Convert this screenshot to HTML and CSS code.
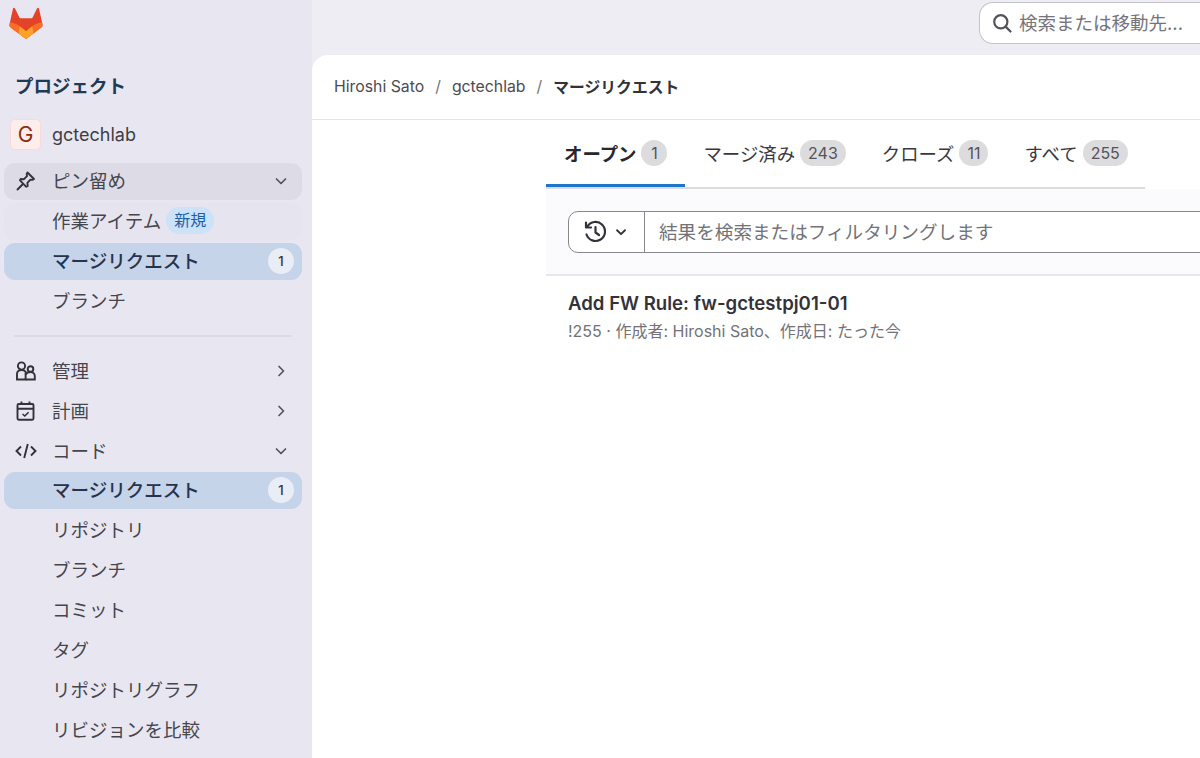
FILE: index.html
```html
<!DOCTYPE html>
<html lang="ja">
  <head>
    <meta charset="UTF-8" />
    <meta name="viewport" content="width=device-width, initial-scale=1.0" />
    <title>マージリクエスト</title>
    <link rel="stylesheet" href="styles.css">
  </head>
  <body>
    <aside class="sidebar">
      <div class="logo-row">
        <svg class="logo" width="34" height="33" viewBox="0 0 34 33">
          <path fill="#e24329" d="M17 32 L1.6 20.4 C0.5 19.5 0.2 18.2 0.6 16.9 L4 1.6 C4.2 0.4 5.6 0.4 6 1.5 L10.8 11.2 H23.2 L28 1.5 C28.4 0.4 29.8 0.4 30 1.6 L33.4 16.9 C33.8 18.2 33.5 19.5 32.4 20.4 Z"/>
          <path fill="#fc6d26" d="M17 32 L10.8 27.2 L1.6 20.4 C0.5 19.5 0.2 18.2 0.6 16.9 L0.9 15.4 C4.6 15.6 8 17 10.8 19.2 L17 24.2 L23.2 19.2 C26 17 29.4 15.6 33.1 15.4 L33.4 16.9 C33.8 18.2 33.5 19.5 32.4 20.4 L23.2 27.2 Z"/>
          <path fill="#fca326" d="M17 32 L9.6 26.4 L10.8 19.2 L17 24.2 L23.2 19.2 L24.4 26.4 Z"/>
        </svg>
      </div>

      <h2 class="sidebar-title">プロジェクト</h2>

      <div class="project-row">
        <span class="avatar">G</span>
        <span>gctechlab</span>
      </div>

      <!-- ピン留め -->
      <div class="nav-item nav-open">
        <svg class="nav-icon" width="22" height="20" viewBox="0 0 22 20" fill="none" stroke="#333238" stroke-width="1.9" stroke-linejoin="round" stroke-linecap="round">
          <path d="M12.5 1.5 L19 8 L17.4 8.9 L15.4 8.7 L12.4 11.8 L12.7 15 L11.3 15.8 L5 9.4 L5.7 8 L9 8.2 L12 5.2 L11.7 3.2 Z"/>
          <path d="M8 13 L2.5 18.5"/>
        </svg>
        <span class="nav-label">ピン留め</span>
        <svg class="chevron" width="16" height="16" viewBox="0 0 16 16"><path d="M3.5 6 L8 10.5 L12.5 6"/></svg>
      </div>
      <div class="nav-item nav-sub nav-hint">
        <span class="nav-label">作業アイテム</span>
        <span class="new-badge">新規</span>
      </div>
      <div class="nav-item nav-sub nav-active">
        <span class="nav-label">マージリクエスト</span>
        <span class="count">1</span>
      </div>
      <div class="nav-item nav-sub">
        <span class="nav-label">ブランチ</span>
      </div>

      <hr class="divider">

      <div class="nav-item">
        <svg class="nav-icon" width="22" height="20" viewBox="0 0 22 20" fill="none" stroke="#333238" stroke-width="1.9">
          <circle cx="6.5" cy="5" r="3.6"/>
          <path d="M2 18.5 V13 C2 10.5 4 9 6.5 9 C8 9 9.6 9.6 10.6 10.6 V18.5 Z"/>
          <circle cx="15.5" cy="8" r="2.8"/>
          <path d="M10.6 18.5 H19.8 V15 C19.8 12.8 18 11 15.5 11 C13.4 11 11.6 11.9 10.6 13.5"/>
        </svg>
        <span class="nav-label">管理</span>
        <svg class="chevron" width="16" height="16" viewBox="0 0 16 16"><path d="M6 3.5 L10.5 8 L6 12.5"/></svg>
      </div>
      <div class="nav-item">
        <svg class="nav-icon" width="22" height="20" viewBox="0 0 22 20" fill="none" stroke="#333238" stroke-width="1.9">
          <rect x="2.5" y="3" width="16" height="15.8" rx="1.2"/>
          <path d="M2.5 7.8 H18.5 M6.5 0.5 V3.5 M14.5 0.5 V3.5"/>
          <path d="M7.5 13 L9.8 15 L13.6 11.2" stroke-width="1.6"/>
        </svg>
        <span class="nav-label">計画</span>
        <svg class="chevron" width="16" height="16" viewBox="0 0 16 16"><path d="M6 3.5 L10.5 8 L6 12.5"/></svg>
      </div>
      <div class="nav-item">
        <svg class="nav-icon" width="22" height="18" viewBox="0 0 22 18" fill="none" stroke="#333238" stroke-width="1.9">
          <path d="M6 4.5 L1.5 9 L6 13.5 M16 4.5 L20.5 9 L16 13.5 M12.8 2 L9.2 16"/>
        </svg>
        <span class="nav-label">コード</span>
        <svg class="chevron" width="16" height="16" viewBox="0 0 16 16"><path d="M3.5 6 L8 10.5 L12.5 6"/></svg>
      </div>
      <div class="nav-item nav-sub nav-active">
        <span class="nav-label">マージリクエスト</span>
        <span class="count">1</span>
      </div>
      <div class="nav-item nav-sub"><span class="nav-label">リポジトリ</span></div>
      <div class="nav-item nav-sub"><span class="nav-label">ブランチ</span></div>
      <div class="nav-item nav-sub"><span class="nav-label">コミット</span></div>
      <div class="nav-item nav-sub"><span class="nav-label">タグ</span></div>
      <div class="nav-item nav-sub"><span class="nav-label">リポジトリグラフ</span></div>
      <div class="nav-item nav-sub"><span class="nav-label">リビジョンを比較</span></div>
    </aside>

    <div class="right-side">
      <header class="topbar">
        <div class="global-search">
          <svg width="20" height="20" viewBox="0 0 20 20" fill="none" stroke="#55535a" stroke-width="2.2">
            <circle cx="8.8" cy="8.8" r="6.6"/>
            <path d="M13.6 13.6 L18.5 18.5" stroke-linecap="round"/>
          </svg>
          <span>検索または移動先...</span>
        </div>
      </header>

      <main class="panel">
        <nav class="breadcrumb">
          <span>Hiroshi Sato</span>
          <span class="sep">/</span>
          <span>gctechlab</span>
          <span class="sep">/</span>
          <strong>マージリクエスト</strong>
        </nav>

        <section class="content">
          <div class="tabs">
            <div class="tab tab-active">オープン <span class="tab-count">1</span></div>
            <div class="tab">マージ済み <span class="tab-count">243</span></div>
            <div class="tab">クローズ <span class="tab-count">11</span></div>
            <div class="tab">すべて <span class="tab-count">255</span></div>
          </div>

          <div class="filter-band">
            <div class="filter-box">
              <div class="history-btn">
                <svg width="24" height="24" viewBox="0 0 24 24" fill="none" stroke="#333238" stroke-width="2.2" stroke-linecap="round" stroke-linejoin="round">
                  <path d="M3.5 14.5 A9.5 9.5 0 1 0 4.4 6.5"/>
                  <path d="M3 2.5 V7.5 H8"/>
                  <path d="M12.5 7 V12.5 L16 15"/>
                </svg>
                <svg width="14" height="14" viewBox="0 0 16 16" fill="none" stroke="#333238" stroke-width="2.2" stroke-linecap="round" stroke-linejoin="round"><path d="M3.5 6 L8 10.5 L12.5 6"/></svg>
              </div>
              <div class="filter-input">結果を検索またはフィルタリングします</div>
            </div>
          </div>

          <div class="mr-item">
            <div class="mr-title">Add FW Rule: fw-gctestpj01-01</div>
            <div class="mr-meta">!255 · 作成者: Hiroshi Sato、作成日: たった今</div>
          </div>
        </section>
      </main>
    </div>
  </body>
</html>
```

FILE: styles.css
```css
* {
  box-sizing: border-box;
}

html,
body {
  height: 100%;
}

body {
  margin: 0;
  display: flex;
  overflow: hidden;
  background-color: #eeedf4;
  color: #333238;
  font-family: Inter, "Noto Sans CJK JP", sans-serif;
  font-size: 18.5px;
}

/* Sidebar */
.sidebar {
  width: 312px;
  flex-shrink: 0;
  padding: 0 10px 0 4px;
  background-color: #e8e7f1;
}

.logo-row {
  height: 69px;
  padding: 7px 0 0 5px;
}

.logo {
  display: block;
}

.sidebar-title {
  margin: 0;
  padding-left: 11px;
  height: 34px;
  line-height: 34px;
  font-size: 18.5px;
  font-weight: 700;
  color: #1f3a55;
}

.project-row {
  display: flex;
  align-items: center;
  gap: 11px;
  height: 42px;
  margin-top: 10px;
  padding-left: 6px;
  font-size: 18px;
  color: #3f3e45;
}

.avatar {
  width: 31px;
  height: 31px;
  display: flex;
  align-items: center;
  justify-content: center;
  border: 1px solid #f5dcd8;
  border-radius: 5px;
  background-color: #fdeeeb;
  color: #8f2a14;
  font-size: 21px;
}

.nav-item {
  display: flex;
  align-items: center;
  height: 37px;
  margin-bottom: 3px;
  padding: 0 13px 0 11px;
  border-radius: 11px;
  color: #46454c;
  line-height: 34px;
}

.nav-open {
  margin-top: 8px;
  padding-bottom: 2px;
  background-color: #dddce6;
}

.nav-hint {
  background-color: #e6e5ef;
}

.nav-sub {
  padding-left: 48px;
  padding-bottom: 2px;
}

.nav-active {
  background-color: #c6d4e9;
  color: #27334d;
  font-weight: 500;
}

.nav-icon {
  flex-shrink: 0;
  margin-right: 15px;
}

.nav-label {
  white-space: nowrap;
}

.chevron {
  margin-left: auto;
  fill: none;
  stroke: #55535a;
  stroke-width: 1.7;
  stroke-linecap: round;
  stroke-linejoin: round;
}

.new-badge {
  margin-left: 5px;
  padding: 0 8px;
  height: 27px;
  line-height: 27px;
  border-radius: 14px;
  background-color: #cbe2f9;
  color: #1f5ea8;
  font-size: 16px;
}

.count {
  margin-left: auto;
  margin-right: -5px;
  width: 26px;
  height: 26px;
  line-height: 26px;
  text-align: center;
  border-radius: 50%;
  background-color: #e9edf6;
  color: #333238;
  font-size: 13px;
  font-weight: 500;
}

.divider {
  height: 2px;
  margin: 15px 10px 15px 10px;
  border: 0;
  background-color: #dddce6;
}

/* Right side */
.right-side {
  flex: 1;
  min-width: 0;
  display: flex;
  flex-direction: column;
}

.topbar {
  height: 55px;
  flex-shrink: 0;
  padding: 2px 0 0 667px;
}

.global-search {
  display: flex;
  align-items: center;
  gap: 7px;
  width: 221px;
  height: 42px;
  padding-left: 12px;
  border: 1px solid #c4c3c9;
  border-right: 0;
  border-radius: 14px 0 0 14px;
  background-color: #fff;
  color: #75747b;
  white-space: nowrap;
  line-height: 36px;
}

.panel {
  flex: 1;
  min-width: 0;
  overflow: hidden;
  background-color: #fff;
  border-top-left-radius: 16px;
}

.breadcrumb {
  display: flex;
  align-items: center;
  gap: 11px;
  height: 65px;
  padding: 0 0 2px 22px;
  border-bottom: 1px solid #e4e3ea;
  font-size: 15.8px;
  color: #4c4b52;
}

.breadcrumb strong {
  color: #333238;
  font-weight: 700;
}

.sep {
  color: #737278;
}

.content {
  margin-left: 234px;
}

.tabs {
  display: flex;
  width: 599px;
  height: 69px;
  border-bottom: 2px solid #dcdcde;
}

.tab {
  display: flex;
  align-items: center;
  gap: 5px;
  height: 67px;
  padding: 2px 18px 0 18px;
  white-space: nowrap;
  color: #3a383f;
  border-bottom: 3px solid transparent;
  font-size: 18.4px;
}

.tab-active {
  border-bottom-color: #1f75cb;
  font-weight: 700;
  color: #28272d;
}

.tab-count {
  min-width: 26px;
  height: 26px;
  line-height: 26px;
  padding: 0 8px;
  text-align: center;
  border-radius: 13px;
  background-color: #dcdcde;
  color: #55535a;
  font-size: 16px;
  font-weight: 400;
}

.filter-band {
  height: 87px;
  padding: 22px 0 0 22px;
  background-color: #fbfafd;
  border-bottom: 2px solid #e7e6ea;
}

.filter-box {
  display: flex;
  width: 700px;
  height: 42px;
  border: 1px solid #89888d;
  border-radius: 10px;
  background-color: #fff;
}

.history-btn {
  display: flex;
  align-items: center;
  justify-content: center;
  gap: 7px;
  width: 76px;
  flex-shrink: 0;
  padding-right: 2px;
  border-right: 1px solid #89888d;
}

.filter-input {
  flex: 1;
  line-height: 40px;
  padding-left: 14px;
  color: #737278;
  white-space: nowrap;
  font-size: 18.6px;
}

.mr-item {
  padding: 14px 0 0 22px;
}

.mr-title {
  font-size: 18.6px;
  font-weight: 600;
  line-height: 26px;
  color: #333238;
}

.mr-meta {
  margin-top: 3px;
  font-size: 16px;
  line-height: 24px;
  color: #737278;
}
```
